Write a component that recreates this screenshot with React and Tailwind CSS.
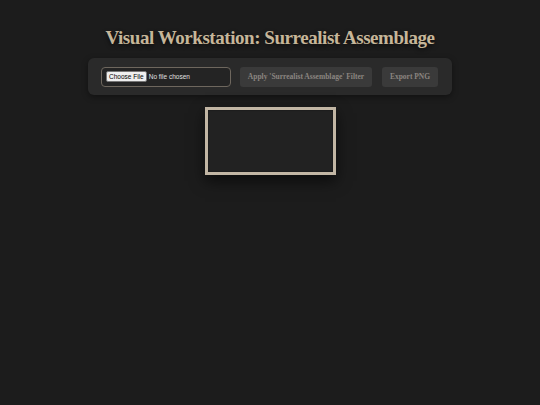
export default function App() {
  return (
    <div className="min-h-[405px] w-full bg-[#1c1c1c] flex flex-col items-center pt-[26px]" style={{ fontFamily: '"Liberation Serif", serif' }}>
      <h1 className="text-[19px] leading-[24px] tracking-[-0.45px] font-bold text-[#c6b699] [text-shadow:0_2px_4px_rgba(0,0,0,0.6)]">
        Visual Workstation: Surrealist Assemblage
      </h1>
      <div className="mt-[8px] w-[364px] h-[37px] bg-[#2a2a2a] rounded-[6px] flex items-center px-[13px] gap-[9px] shadow-[0_2px_6px_rgba(0,0,0,0.4)]">
        <div className="w-[130px] h-[20px] border border-[#6e675e] rounded-[4px] bg-[#242424] flex items-center px-[4px]">
          <input type="file" className="text-[6.5px] text-[#e0e0e0] w-[120px] file:text-[6.5px] file:px-[2px] file:py-0 file:mr-[2px] file:bg-[#efefef] file:text-black file:border file:border-[#767676] file:rounded-[2px]" style={{ fontFamily: '"Liberation Sans", sans-serif' }} />
        </div>
        <button className="h-[20px] w-[132px] bg-[#3a3a3a] rounded-[3px] text-[7.5px] font-bold text-[#8a8580]">
          Apply 'Surrealist Assemblage' Filter
        </button>
        <button className="ml-[1px] h-[20px] w-[56px] bg-[#3a3a3a] rounded-[3px] text-[7.5px] font-bold text-[#8a8580]">
          Export PNG
        </button>
      </div>
      <div className="mt-[12px] w-[131px] h-[68px] border-[3px] border-[#c2b6a4] bg-[#222222] shadow-[0_6px_14px_rgba(0,0,0,0.6),inset_0_0_2px_rgba(0,0,0,0.5)]" />
    </div>
  );
}
